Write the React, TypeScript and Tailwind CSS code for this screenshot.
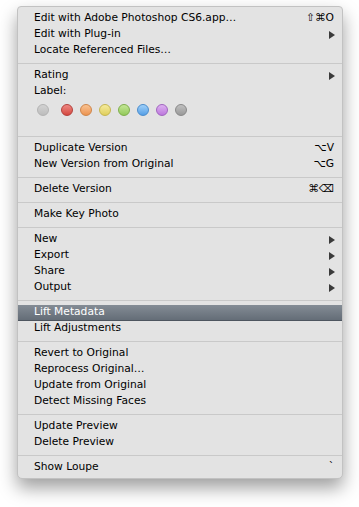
import React from "react";

type Item =
  | { kind: "item"; label: string; shortcut?: string; arrow?: boolean; active?: boolean }
  | { kind: "sep" }
  | { kind: "dots" };

const items: Item[] = [
  { kind: "item", label: "Edit with Adobe Photoshop CS6.app…", shortcut: "⇧⌘O" },
  { kind: "item", label: "Edit with Plug-in", arrow: true },
  { kind: "item", label: "Locate Referenced Files…" },
  { kind: "sep" },
  { kind: "item", label: "Rating", arrow: true },
  { kind: "item", label: "Label:" },
  { kind: "dots" },
  { kind: "sep" },
  { kind: "item", label: "Duplicate Version", shortcut: "⌥V" },
  { kind: "item", label: "New Version from Original", shortcut: "⌥G" },
  { kind: "sep" },
  { kind: "item", label: "Delete Version", shortcut: "⌘⌫" },
  { kind: "sep" },
  { kind: "item", label: "Make Key Photo" },
  { kind: "sep" },
  { kind: "item", label: "New", arrow: true },
  { kind: "item", label: "Export", arrow: true },
  { kind: "item", label: "Share", arrow: true },
  { kind: "item", label: "Output", arrow: true },
  { kind: "sep" },
  { kind: "item", label: "Lift Metadata", active: true },
  { kind: "item", label: "Lift Adjustments" },
  { kind: "sep" },
  { kind: "item", label: "Revert to Original" },
  { kind: "item", label: "Reprocess Original…" },
  { kind: "item", label: "Update from Original" },
  { kind: "item", label: "Detect Missing Faces" },
  { kind: "sep" },
  { kind: "item", label: "Update Preview" },
  { kind: "item", label: "Delete Preview" },
  { kind: "sep" },
  { kind: "item", label: "Show Loupe", shortcut: "`" },
];

function Arrow() {
  return (
    <svg width="6" height="8" viewBox="0 0 6 8" className="block">
      <path d="M0 0 L6 4 L0 8 Z" fill="#3a3a3a" />
    </svg>
  );
}

function Dots() {
  const dot = "w-[12px] h-[12px] rounded-full border shrink-0";
  return (
    <div className="h-[32px] flex items-start pt-[4px] pl-[19px]">
      <div className={`${dot} bg-linear-to-b from-[#d2d2d2] to-[#bdbdbd] border-[#b3b3b3]`} />
      <div className="flex gap-[7px] ml-[12px]">
        <div className={`${dot} bg-linear-to-b from-[#ee8783] to-[#d4473f] border-[#b33f3a]`} />
        <div className={`${dot} bg-linear-to-b from-[#f9c291] to-[#ec9450] border-[#cf8549]`} />
        <div className={`${dot} bg-linear-to-b from-[#f5eb9c] to-[#e0cf5c] border-[#c5b650]`} />
        <div className={`${dot} bg-linear-to-b from-[#c4e796] to-[#93c95a] border-[#7eae4b]`} />
        <div className={`${dot} bg-linear-to-b from-[#9fd0f8] to-[#559fe6] border-[#4a8ccc]`} />
        <div className={`${dot} bg-linear-to-b from-[#ddb1f0] to-[#bd78dd] border-[#a064bf]`} />
        <div className={`${dot} bg-linear-to-b from-[#c0c0c0] to-[#999999] border-[#888888]`} />
      </div>
    </div>
  );
}

export default function App() {
  return (
    <div className="w-[359px] h-[507px] bg-white pt-[6px] pl-[17px]" style={{ fontFamily: '"Lucida Grande", "DejaVu Sans", sans-serif' }}>
      <div className="w-[326px] bg-[#e3e3e3] border border-[#c2c2c2] rounded-t-[4px] rounded-b-[5px] pt-[4px] pb-[2px] shadow-[0_9px_18px_rgba(0,0,0,0.38)] text-[10.7px] text-black">
        {items.map((it, i) => {
          if (it.kind === "sep")
            return (
              <div key={i} className="h-[9px] flex items-center">
                <div className="h-px w-full bg-[#c9c9c9]" />
              </div>
            );
          if (it.kind === "dots") return <Dots key={i} />;
          return (
            <div
              key={i}
              className={
                it.active
                  ? "h-[16px] flex items-center pl-[16px] pr-[8px] bg-linear-to-b from-[#848c95] to-[#646d77] border-b border-[#4d555f] text-white leading-none"
                  : "h-[16px] flex items-center pl-[16px] pr-[8px] pb-[1px] leading-none"
              }
            >
              <span className="whitespace-nowrap">{it.label}</span>
              {it.shortcut && <span className="ml-auto whitespace-nowrap">{it.shortcut}</span>}
              {it.arrow && (
                <span className="ml-auto mr-[-1px]">
                  <Arrow />
                </span>
              )}
            </div>
          );
        })}
      </div>
    </div>
  );
}
